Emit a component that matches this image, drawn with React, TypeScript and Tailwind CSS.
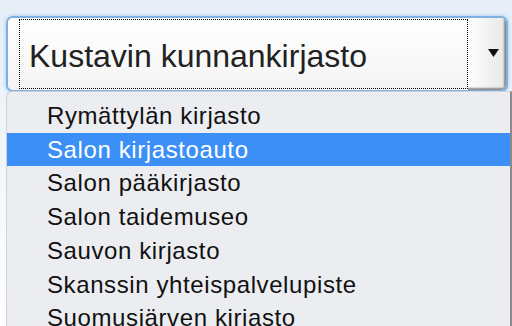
const options = [
  "Rymättylän kirjasto",
  "Salon kirjastoauto",
  "Salon pääkirjasto",
  "Salon taidemuseo",
  "Sauvon kirjasto",
  "Skanssin yhteispalvelupiste",
  "Suomusjärven kirjasto",
];

export default function App() {
  return (
    <div className="h-[326px] w-[512px] overflow-hidden bg-gradient-to-b from-[#e6eef7] to-white font-['Liberation_Sans',sans-serif]">
      <div className="pl-[6px] pt-[16px]">
        {/* select with focus ring */}
        <div className="flex h-[76px] w-[502px] overflow-hidden rounded-[7px] border-2 border-[#7fb0e3] bg-white shadow-[0_0_4px_#9cc4ee]">
          <div className="flex flex-1 items-center bg-gradient-to-b from-white to-[#f4f4f4] py-px pl-[11px]">
            <div className="flex h-full flex-1 items-center border border-dotted border-black pl-[9px] pt-[3px] text-[32px] text-[#222]">
              Kustavin kunnankirjasto
            </div>
          </div>
          <div className="flex w-[38px] items-center justify-center bg-gradient-to-r from-white via-[#f2f2f2] to-[#e8e8e8] pb-[3px] pl-[12px] shadow-[inset_-2px_-2px_2px_#888]">
            <svg width="11" height="8" viewBox="0 0 11 8">
              <path d="M0 0h11L5.5 8z" fill="#111" />
            </svg>
          </div>
        </div>
        {/* dropdown list */}
        <div className="mt-[-1px] w-[506px] rounded-tl-[6px] border-l border-r-2 border-t border-[#cfd2d8] border-r-[#8a8a8a] bg-[#ecedf1] pt-[7px] text-[24px] leading-[33.7px] tracking-[0.6px] text-[#111]">
          {options.map((o, i) => (
            <div
              key={o}
              className={i === 1 ? "bg-[#3b8ff7] pl-[40px] text-white" : "pl-[40px]"}
            >
              {o}
            </div>
          ))}
        </div>
      </div>
    </div>
  );
}
